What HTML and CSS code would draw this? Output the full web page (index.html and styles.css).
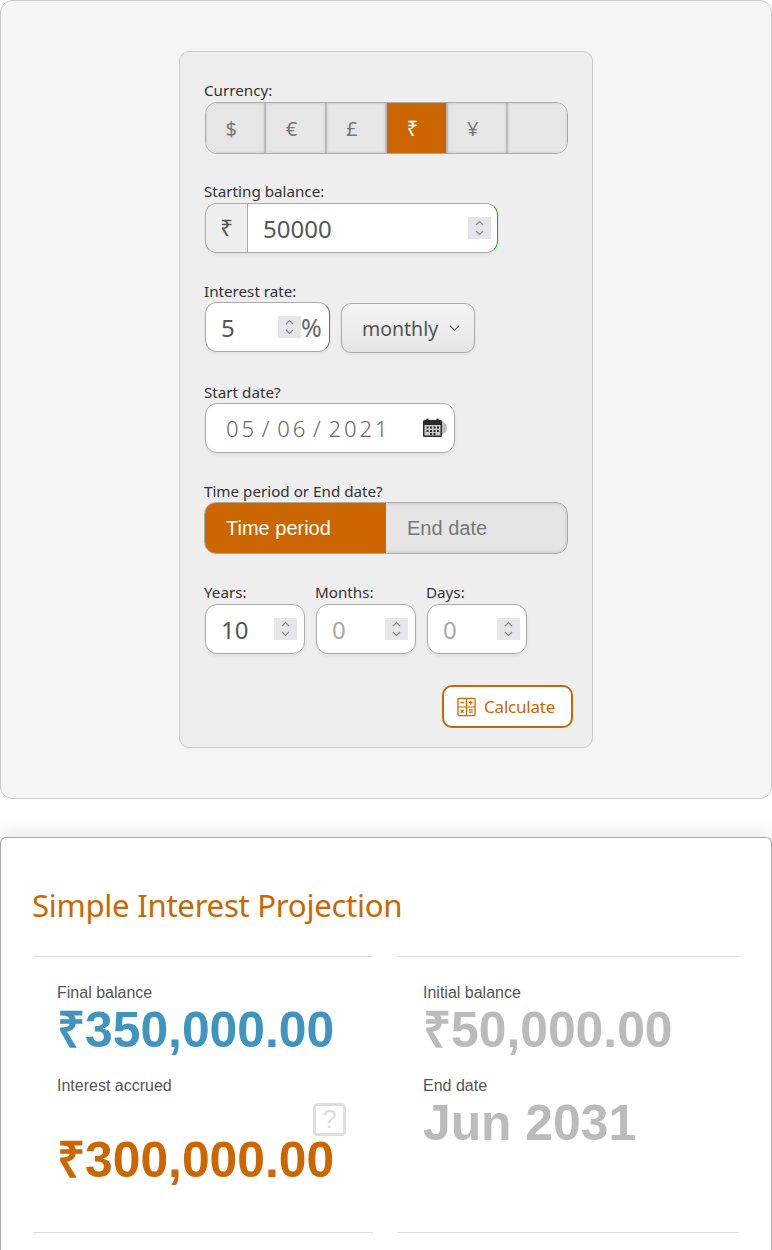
FILE: index.html
```html
<!DOCTYPE html>
<html lang="en">
<head>
    <meta charset="UTF-8">
    <meta name="viewport" content="width=device-width, initial-scale=1.0">
    <title>Simple Interest Calculator</title>
    <link rel="stylesheet" href="styles.css">
</head>
<body>
    <section class="form-panel">
        <form class="calc-form">
            <div class="field field-currency">
                <p class="label">Currency:</p>
                <div class="segments">
                    <button type="button" class="segment">$</button>
                    <button type="button" class="segment">€</button>
                    <button type="button" class="segment">£</button>
                    <button type="button" class="segment active">₹</button>
                    <button type="button" class="segment">¥</button>
                    <button type="button" class="segment"></button>
                </div>
            </div>

            <div class="field field-balance">
                <p class="label">Starting balance:</p>
                <div class="box box-balance valid">
                    <span class="prefix">₹</span>
                    <span class="value">50000</span>
                    <span class="spin"><svg viewBox="0 0 23 22"><path d="M8 8l3.5-3.5L15 8M8 14l3.5 3.5L15 14"/></svg></span>
                </div>
            </div>

            <div class="field field-rate">
                <p class="label">Interest rate:</p>
                <div class="rate-row">
                    <div class="box box-rate valid">
                        <span class="value">5</span>
                        <span class="spin"><svg viewBox="0 0 23 22"><path d="M8 8l3.5-3.5L15 8M8 14l3.5 3.5L15 14"/></svg></span>
                        <span class="percent">%</span>
                    </div>
                    <div class="select">
                        <span>monthly</span>
                        <svg viewBox="0 0 14 8"><path d="M2 1.5l5 5 5-5"/></svg>
                    </div>
                </div>
            </div>

            <div class="field field-date">
                <p class="label">Start date?</p>
                <div class="box box-date">
                    <span class="date-text">05 / 06 / 2021</span>
                    <span class="date-dot"></span>
                    <svg class="calendar" viewBox="0 0 20 20">
                        <rect x="0.5" y="2" width="19" height="17" rx="1.5" fill="#2b2b2b"/>
                        <rect x="4" y="0.5" width="2" height="3" fill="#2b2b2b"/>
                        <rect x="14" y="0.5" width="2" height="3" fill="#2b2b2b"/>
                        <rect x="2" y="7" width="16" height="10.5" fill="#c9c9c9"/>
                        <path d="M4 8.5h2v2H4zM7.5 8.5h2v2h-2zM11 8.5h2v2h-2zM14.5 8.5h2v2h-2zM4 12h2v2H4zM7.5 12h2v2h-2zM11 12h2v2h-2zM14.5 12h2v2h-2zM7.5 15h2v2h-2zM11 15h2v2h-2z" fill="#2b2b2b"/>
                    </svg>
                </div>
            </div>

            <div class="field field-mode">
                <p class="label">Time period or End date?</p>
                <div class="toggle">
                    <button type="button" class="toggle-item active">Time period</button>
                    <button type="button" class="toggle-item">End date</button>
                </div>
            </div>

            <div class="period-row">
                <div class="period">
                    <p class="label">Years:</p>
                    <div class="box box-period">
                        <span class="value">10</span>
                        <span class="spin"><svg viewBox="0 0 23 22"><path d="M8 8l3.5-3.5L15 8M8 14l3.5 3.5L15 14"/></svg></span>
                    </div>
                </div>
                <div class="period">
                    <p class="label">Months:</p>
                    <div class="box box-period">
                        <span class="value empty">0</span>
                        <span class="spin"><svg viewBox="0 0 23 22"><path d="M8 8l3.5-3.5L15 8M8 14l3.5 3.5L15 14"/></svg></span>
                    </div>
                </div>
                <div class="period">
                    <p class="label">Days:</p>
                    <div class="box box-period">
                        <span class="value empty">0</span>
                        <span class="spin"><svg viewBox="0 0 23 22"><path d="M8 8l3.5-3.5L15 8M8 14l3.5 3.5L15 14"/></svg></span>
                    </div>
                </div>
            </div>

            <div class="actions">
                <button type="button" class="calculate">
                    <svg viewBox="0 0 20 20">
                        <rect x="1" y="1" width="18" height="18" rx="1" fill="none" stroke="#cc6600" stroke-width="1.4"/>
                        <path d="M10 1v18M1 10h18M3.5 5.5h4M12.5 5.5h4M14.5 3.5v4M12.5 13h4M12.5 15.5h4M4 13l3 3M7 13l-3 3" fill="none" stroke="#cc6600" stroke-width="1.3"/>
                    </svg>
                    Calculate
                </button>
            </div>
        </form>
    </section>

    <section class="results">
        <h2>Simple Interest Projection</h2>
        <div class="results-grid">
            <div class="column">
                <p class="result-label">Final balance</p>
                <p class="amount blue">₹350,000.00</p>
                <p class="result-label second">Interest accrued</p>
                <div class="help-row">
                    <svg class="help" viewBox="0 0 34 34">
                        <rect x="1.5" y="1.5" width="31" height="31" rx="3" fill="none" stroke="#dedede" stroke-width="3"/>
                        <text x="17" y="26" text-anchor="middle" font-size="26" fill="#dedede">?</text>
                    </svg>
                </div>
                <p class="amount orange">₹300,000.00</p>
            </div>
            <div class="column column-right">
                <p class="result-label">Initial balance</p>
                <p class="amount grey">₹50,000.00</p>
                <p class="result-label second">End date</p>
                <p class="amount grey">Jun 2031</p>
            </div>
        </div>
    </section>
</body>
</html>
```

FILE: styles.css
```css
* {
    box-sizing: border-box;
}

body {
    margin: 0;
    background: #fff;
    font-family: "Noto Sans", "Liberation Sans", sans-serif;
    color: #333;
}

p {
    margin: 0;
}

button {
    font-family: inherit;
    padding: 0;
}

/* top panel */
.form-panel {
    height: 799px;
    padding: 50px 0;
    background: #f5f5f5;
    border: 1px solid #ccc;
    border-radius: 12px;
}

.calc-form {
    width: 414px;
    height: 697px;
    margin-left: 178px;
    padding: 28px 24px 0 25px;
    background: #eee;
    border: 1px solid #ccc;
    border-radius: 10px;
}

.label {
    height: 22px;
    margin-left: -1px;
    font-size: 15.2px;
    line-height: 22px;
    color: #333;
}

.field-currency .label,
.field-balance .label,
.period .label {
    line-height: 20px;
}

.field-balance { margin-top: 27px; }
.field-rate { margin-top: 27px; }
.field-date { margin-top: 28px; }
.field-mode { margin-top: 27px; }

.segments {
    display: flex;
    width: 363px;
    height: 52px;
    border: 1px solid #aaa;
    border-radius: 12px;
    overflow: hidden;
    box-shadow: inset 0 0 4px rgba(0, 0, 0, 0.2);
}

.segment {
    flex: none;
    width: 60.4px;
    padding-right: 8px;
    border: 0;
    border-right: 2px solid #bbb;
    background: #e6e6e6;
    font-size: 20px;
    color: #777;
    box-shadow: inset 0 0 3px rgba(0, 0, 0, 0.12);
}

.segment:last-child {
    flex: 1;
    border-right: 0;
}

.segment.active {
    background: #cc6600;
    color: #fff;
    box-shadow: none;
}

.box {
    display: flex;
    align-items: center;
    height: 50px;
    background: #fff;
    border: 1px solid #aaa;
    border-radius: 12px;
    box-shadow: 0 2px 3px rgba(0, 0, 0, 0.06);
    overflow: hidden;
}

.box.valid {
    border-right-color: #2a9a2a;
}

.value {
    flex: 1;
    font-size: 24px;
    color: #555;
}

.value.empty {
    color: #aaa;
}

.spin {
    flex: none;
    width: 23px;
    height: 22px;
    background: #e6e6ea;
}

.spin svg {
    display: block;
    width: 23px;
    height: 22px;
    fill: none;
    stroke: #888;
    stroke-width: 1.2;
}

.box-balance {
    width: 293px;
    padding-right: 6px;
}

.prefix {
    flex: none;
    width: 42px;
    height: 100%;
    margin-right: 15px;
    background: #eee;
    border-right: 1px solid #aaa;
    text-align: center;
    font-size: 23px;
    line-height: 46px;
    color: #555;
}

.rate-row {
    display: flex;
    align-items: flex-start;
    gap: 11px;
}

.box-rate {
    width: 125px;
    padding-left: 15px;
}

.percent {
    flex: none;
    width: 28px;
    font-size: 25px;
    line-height: 30px;
    color: #666;
}

.select {
    display: flex;
    align-items: center;
    width: 134px;
    height: 50px;
    margin-top: 1px;
    padding: 0 13px 0 20px;
    justify-content: space-between;
    background: linear-gradient(#f4f4f4, #e6e6e6);
    border: 1px solid #aaa;
    border-radius: 10px;
    box-shadow: 0 2px 3px rgba(0, 0, 0, 0.06);
    font-size: 19.5px;
    color: #555;
}

.select svg {
    width: 13px;
    height: 8px;
    fill: none;
    stroke: #555;
    stroke-width: 1.2;
}

.box-date {
    position: relative;
    width: 250px;
    padding: 0 11px 0 20px;
    justify-content: space-between;
}

.date-text {
    font-family: "Noto Sans", sans-serif;
    font-size: 22px;
    font-weight: 300;
    letter-spacing: 3px;
    word-spacing: -4px;
    color: #666;
}

.calendar {
    position: relative;
    width: 21px;
    height: 20px;
}

.date-dot {
    position: absolute;
    right: 7px;
    top: 17px;
    width: 14px;
    height: 14px;
    border-radius: 50%;
    background: #bbb;
}

.toggle {
    display: flex;
    width: 364px;
    height: 52px;
    margin-left: -1px;
    border: 1px solid #aaa;
    border-radius: 12px;
    overflow: hidden;
    background: #e5e5e5;
    box-shadow: inset 0 0 4px rgba(0, 0, 0, 0.15);
}

.toggle-item {
    flex: 1;
    border: 0;
    background: none;
    padding-left: 21px;
    text-align: left;
    font-family: "Liberation Sans", sans-serif;
    font-size: 20px;
    color: #777;
}

.toggle-item.active {
    background: #cc6600;
    color: #fff;
}

.period-row {
    display: flex;
    gap: 11px;
    margin-top: 28px;
}

.period {
    width: 100px;
}

.box-period {
    padding: 0 7px 0 15px;
}

.period:last-child .box-period {
    padding-right: 6px;
}

.actions {
    display: flex;
    justify-content: flex-end;
    margin: 31px -5px 0 0;
}

.calculate {
    display: flex;
    align-items: center;
    gap: 8px;
    width: 131px;
    height: 43px;
    padding-left: 13px;
    background: #fff;
    border: 2px solid #cc6600;
    border-radius: 10px;
    font-size: 17px;
    letter-spacing: -0.2px;
    color: #cc6600;
}

.calculate svg {
    width: 19px;
    height: 20px;
}

/* results */
.results {
    height: 500px;
    margin-top: 38px;
    padding: 44px 32px 0;
    background: #fff;
    border: 1px solid #aaa;
    border-bottom: 0;
    border-radius: 6px;
    box-shadow: 0 -8px 16px rgba(0, 0, 0, 0.07);
}

.results h2 {
    margin: 0 0 28px -1px;
    font-size: 31.2px;
    font-weight: 400;
    line-height: 46px;
    letter-spacing: -0.3px;
    color: #cc6600;
}

.results-grid {
    display: grid;
    grid-template-columns: 340px 341px;
    gap: 25px;
}

.column {
    height: 277px;
    padding: 26px 0 0 24px;
    border-top: 1px solid #ddd;
    border-bottom: 1px solid #ddd;
    font-family: "Liberation Sans", sans-serif;
}

.column-right {
    padding-left: 25px;
}

.result-label {
    height: 20px;
    font-size: 16px;
    line-height: 20px;
    color: #555;
}

.result-label.second {
    margin-top: 18px;
}

.amount {
    height: 55px;
    font-size: 49.8px;
    font-weight: 700;
    line-height: 55px;
    white-space: nowrap;
}

.blue { color: #3f94c0; }
.orange { color: #cc6600; }
.grey { color: #bbb; }

.help-row {
    display: flex;
    justify-content: flex-end;
    height: 30px;
    margin: 7px 27px 0 0;
}

.help {
    width: 33px;
    height: 33px;
}

.help text {
    font-family: "Liberation Sans", sans-serif;
}
```
